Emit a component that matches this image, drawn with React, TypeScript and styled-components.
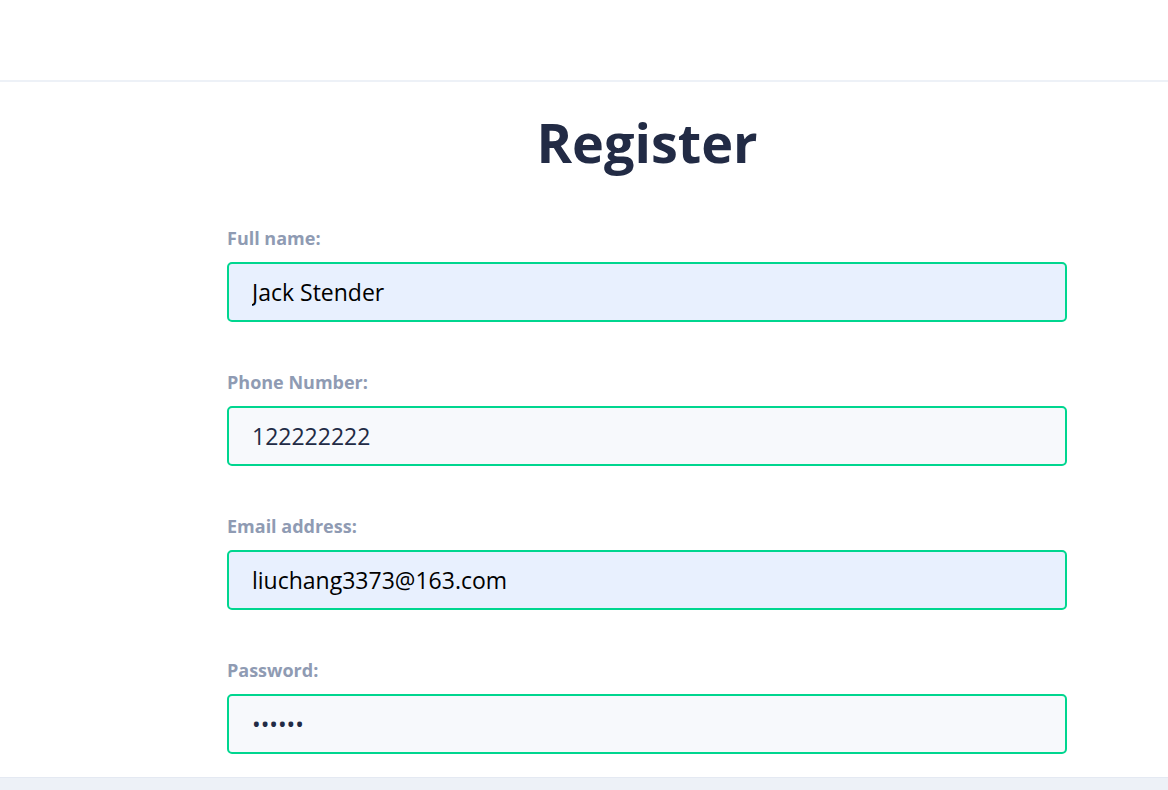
import React from "react";
import styled, { createGlobalStyle } from "styled-components";

const Global = createGlobalStyle`
  html, body { margin: 0; padding: 0; background: #edf1f7; }
  body { font-family: "Open Sans", "Noto Sans", sans-serif; }
  * { box-sizing: border-box; }
`;

const Page = styled.div`
  background: #ffffff;
  border-bottom: 1px solid #e4e9f2;
`;

const Header = styled.header`
  height: 82px;
  border-bottom: 2px solid #edf1f7;
  background: #ffffff;
`;

const Main = styled.main`
  padding: 28px 0 23px 227px;
`;

const Form = styled.form`
  width: 840px;
  display: flex;
  flex-direction: column;
`;

const Title = styled.h1`
  margin: 0 0 52px;
  font-size: 54px;
  line-height: 64px;
  font-weight: 700;
  color: #222b45;
  text-align: center;
`;

const Field = styled.div`
  display: flex;
  flex-direction: column;
  gap: 12px;
  & + & {
    margin-top: 48px;
  }
`;

const Label = styled.label`
  font-size: 18px;
  line-height: 24px;
  font-weight: 700;
  color: #8f9bb3;
`;

const Input = styled.input<{ $autofill?: boolean }>`
  height: 60px;
  width: 100%;
  padding: 0 23px;
  border: 2px solid #00d68f;
  border-radius: 5px;
  background: ${(p) => (p.$autofill ? "#e8f0fe" : "#f7f9fc")};
  color: ${(p) => (p.$autofill ? "#000000" : "#222b45")};
  font-family: "Open Sans", "Noto Sans", sans-serif;
  font-size: 23px;
  outline: none;
`;

const fields = [
  { label: "Full name:", value: "Jack Stender", type: "text", autofill: true },
  { label: "Phone Number:", value: "122222222", type: "text", autofill: false },
  { label: "Email address:", value: "liuchang3373@163.com", type: "email", autofill: true },
  { label: "Password:", value: "123456", type: "password", autofill: false },
];

export default function App() {
  return (
    <>
      <Global />
      <Page>
        <Header />
        <Main>
          <Form onSubmit={(e) => e.preventDefault()}>
            <Title>Register</Title>
            {fields.map((f) => (
              <Field key={f.label}>
                <Label>{f.label}</Label>
                <Input type={f.type} value={f.value} readOnly $autofill={f.autofill} />
              </Field>
            ))}
          </Form>
        </Main>
      </Page>
    </>
  );
}
